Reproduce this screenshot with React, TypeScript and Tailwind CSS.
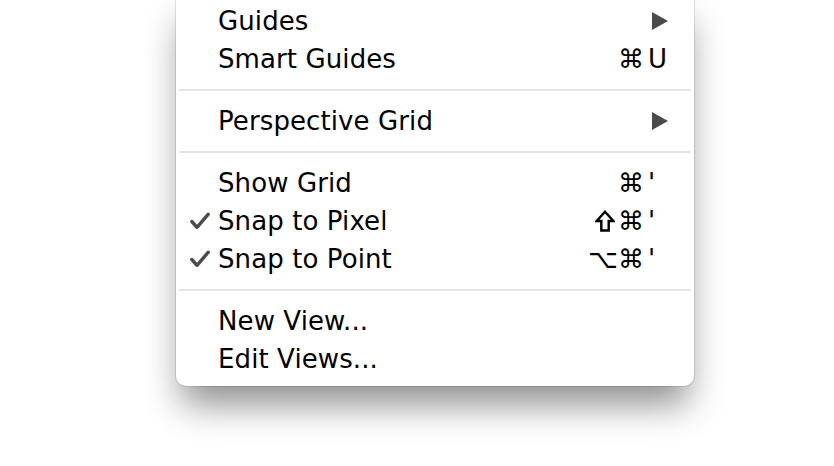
import React from "react";

type Item =
  | { type: "sep" }
  | { type: "item"; label: string; check?: boolean; mods?: React.ReactNode; key?: string; sub?: boolean };

function Shift() {
  return (
    <svg width="20" height="22" viewBox="0 0 20 22" className="inline-block mr-[3px] align-[-2px]">
      <path d="M10 1.8 L18.3 11 L13.7 11 L13.7 20.5 L6.3 20.5 L6.3 11 L1.7 11 Z" fill="none" stroke="#000" strokeWidth="2.4" strokeLinejoin="miter" />
    </svg>
  );
}

const items: Item[] = [
  { type: "item", label: "Guides", sub: true },
  { type: "item", label: "Smart Guides", mods: "⌘", key: "U" },
  { type: "sep" },
  { type: "item", label: "Perspective Grid", sub: true },
  { type: "sep" },
  { type: "item", label: "Show Grid", mods: "⌘", key: "'" },
  { type: "item", label: "Snap to Pixel", check: true, mods: <><Shift />⌘</>, key: "'" },
  { type: "item", label: "Snap to Point", check: true, mods: "⌥⌘", key: "'" },
  { type: "sep" },
  { type: "item", label: "New View..." },
  { type: "item", label: "Edit Views..." },
];

function Check() {
  return (
    <svg width="22" height="20" viewBox="0 0 22 20" className="block">
      <path d="M2.8 10.5 L8 16.3 L19.3 3.2" fill="none" stroke="#4a4a4a" strokeWidth="3.4" strokeLinecap="round" strokeLinejoin="round" />
    </svg>
  );
}

function Tri() {
  return (
    <svg width="16" height="18" viewBox="0 0 16 18" className="block">
      <path d="M0 0 L16 9 L0 18 Z" fill="#4b4b4b" />
    </svg>
  );
}

export default function App() {
  return (
    <div className="w-[834px] h-[466px] bg-white overflow-hidden" style={{ fontFamily: '"DejaVu Sans", "Liberation Sans", sans-serif' }}>
      <div className="ml-[176px] w-[518px] -mt-[8px] pt-[10px] pb-[8px] bg-white rounded-b-[10px] shadow-[0_0_0_1px_rgba(0,0,0,0.1),0_24px_36px_-6px_rgba(0,0,0,0.45)]">
        {items.map((it, i) =>
          it.type === "sep" ? (
            <div key={i} className="h-[24px] flex items-center px-[3px]">
              <div className="h-[2px] w-full bg-[#e4e4e4]" />
            </div>
          ) : (
            <div key={i} className="h-[38px] flex items-center text-[26px] text-black leading-none">
              <div className="w-[42px] flex justify-end pr-[7px]">{it.check ? <Check /> : null}</div>
              <div className="flex-1 tracking-[0.1px]">{it.label}</div>
              {it.sub ? (
                <div className="w-[42px] flex items-center">
                  <Tri />
                </div>
              ) : it.mods ? (
                <div className="flex items-center pr-[27px]">
                  <span className="text-right">{it.mods}</span>
                  <span className="w-[23px] pl-[4px]">{it.key}</span>
                </div>
              ) : null}
            </div>
          )
        )}
      </div>
    </div>
  );
}
